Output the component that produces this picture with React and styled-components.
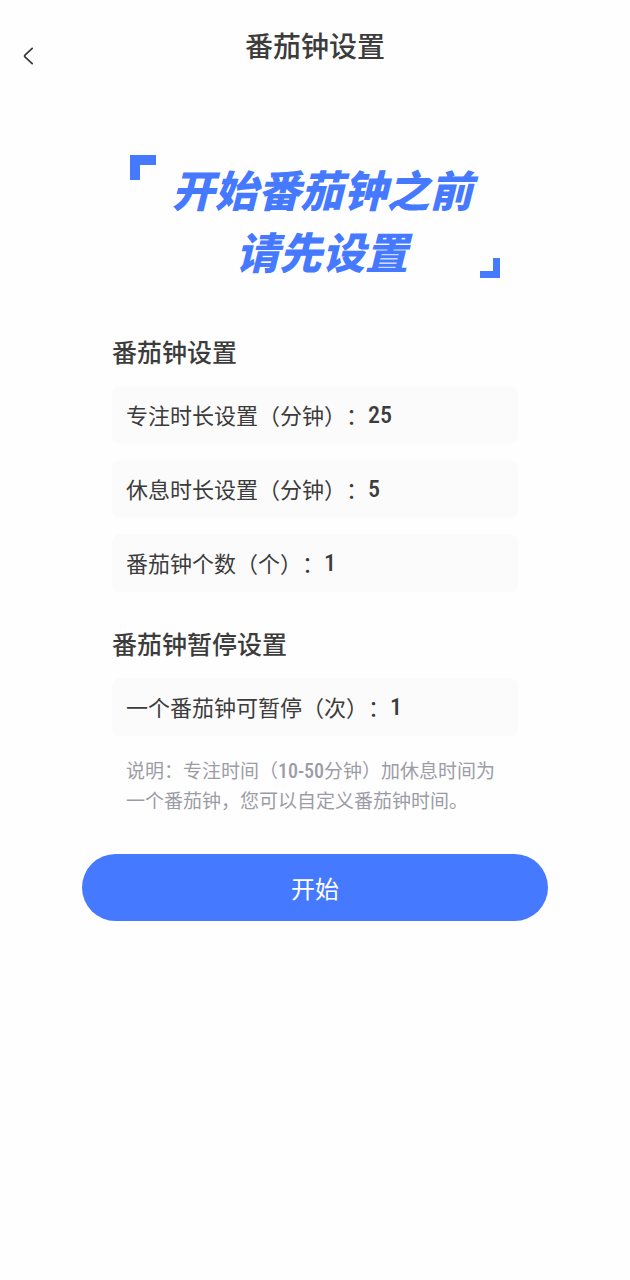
import React from "react";
import styled, { createGlobalStyle } from "styled-components";

const COLORS = {
  blue: "#4579ff",
  text: "#3c3c3c",
  note: "#9c9ca6",
  field: "#fbfbfb",
  page: "#fefefe",
};

const NUMBER_FONT = `"Roboto Condensed", "Liberation Sans Narrow", "Roboto", sans-serif`;

const timerFields = [
  { id: "focus", label: "专注时长设置（分钟）：", value: "25" },
  { id: "rest", label: "休息时长设置（分钟）：", value: "5" },
  { id: "count", label: "番茄钟个数（个）：", value: "1" },
];

const pauseFields = [
  { id: "pause", label: "一个番茄钟可暂停（次）：", value: "1" },
];

const FieldList = ({ fields }) => (
  <Fields>
    {fields.map(({ id, label, value }) => (
      <Field key={id}>
        <FieldLabel htmlFor={id}>{label}</FieldLabel>
        <FieldInput id={id} type="text" inputMode="numeric" defaultValue={value} />
      </Field>
    ))}
  </Fields>
);

const App = () => (
  <>
    <GlobalStyle />
    <Header>
      <BackButton type="button" aria-label="返回">
        <svg width="12" height="20" viewBox="0 0 12 20" fill="none">
          <path
            d="M10.2 2.4 L3.2 8.8 Q2 10 3.2 11.2 L10.2 17.6"
            stroke="currentColor"
            strokeWidth="1.8"
            strokeLinecap="round"
          />
        </svg>
      </BackButton>
      <Title>番茄钟设置</Title>
    </Header>
    <Main>
      <Hero>
        <Corner width="26" height="25" viewBox="0 0 26 25">
          <path d="M0 0H26V10H10V25H0Z" fill="currentColor" />
        </Corner>
        <Slogan>
          开始番茄钟之前
          <br />
          请先设置
        </Slogan>
        <Corner $end width="20" height="20" viewBox="0 0 20 20">
          <path d="M13 0H20V20H0V13H13Z" fill="currentColor" />
        </Corner>
      </Hero>
      <Form>
        <SectionTitle>番茄钟设置</SectionTitle>
        <FieldList fields={timerFields} />
        <SectionTitle>番茄钟暂停设置</SectionTitle>
        <FieldList fields={pauseFields} />
        <Note>
          说明：专注时间（<NoteNumber>10-50</NoteNumber>
          分钟）加休息时间为一个番茄钟，您可以自定义番茄钟时间。
        </Note>
      </Form>
      <StartButton type="button">开始</StartButton>
    </Main>
  </>
);

const GlobalStyle = createGlobalStyle`
  * {
    box-sizing: border-box;
  }

  body {
    margin: 0;
    background: ${COLORS.page};
    color: ${COLORS.text};
    font-family: "Noto Sans CJK SC", sans-serif;
    text-spacing-trim: space-all;
  }
`;

const Header = styled.header`
  display: grid;
  grid-template-columns: 56px 1fr 56px;
  align-items: start;
  padding-top: 25px;
`;

const BackButton = styled.button`
  display: flex;
  justify-content: center;
  padding: 21px 0 0;
  border: none;
  background: none;
  color: ${COLORS.text};
  cursor: pointer;
`;

const Title = styled.h1`
  margin: 0;
  font-size: 28px;
  font-weight: 500;
  line-height: 40px;
  text-align: center;
`;

const Main = styled.main`
  padding: 0 13%;
`;

const Hero = styled.div`
  display: flex;
  justify-content: space-between;
  margin: 89px 48px 55px;
  color: ${COLORS.blue};
`;

const Corner = styled.svg`
  flex: none;
  align-self: ${(p) => (p.$end ? "flex-end" : "flex-start")};
`;

const Slogan = styled.h2`
  flex: 1;
  margin: 2px 0 -3px;
  padding-left: 8px;
  font-size: 43px;
  font-style: italic;
  font-weight: 900;
  line-height: 62px;
  text-align: center;
  white-space: nowrap;
`;

const Form = styled.div`
  margin: 0 30px;
`;

const SectionTitle = styled.h3`
  margin: 33px 0 17px;
  font-size: 25px;
  font-weight: 500;
  line-height: 36px;
`;

const Fields = styled.div`
  display: grid;
  grid-template-columns: minmax(0, 1fr);
  gap: 16px;
`;

const Field = styled.div`
  display: flex;
  align-items: center;
  height: 58px;
  padding: 0 14px;
  border-radius: 8px;
  background: ${COLORS.field};
`;

const FieldLabel = styled.label`
  flex: none;
  padding-bottom: 2px;
  font-size: 22px;
  line-height: 32px;
`;

const FieldInput = styled.input`
  flex: 1;
  min-width: 0;
  padding: 0;
  border: none;
  background: none;
  color: inherit;
  font-family: ${NUMBER_FONT};
  font-size: 24px;
  font-weight: 500;

  &:focus {
    outline: none;
  }
`;

const Note = styled.p`
  margin: 19px 14px 0;
  font-size: 19px;
  line-height: 30px;
  color: ${COLORS.note};
`;

const NoteNumber = styled.span`
  font-family: ${NUMBER_FONT};
  font-size: 20px;
  font-weight: 500;
  line-height: 1;
`;

const StartButton = styled.button`
  width: 100%;
  height: 67px;
  margin-top: 39px;
  border: none;
  border-radius: 34px;
  background: ${COLORS.blue};
  color: white;
  font-family: inherit;
  font-size: 24px;
  cursor: pointer;
`;

export default App;
